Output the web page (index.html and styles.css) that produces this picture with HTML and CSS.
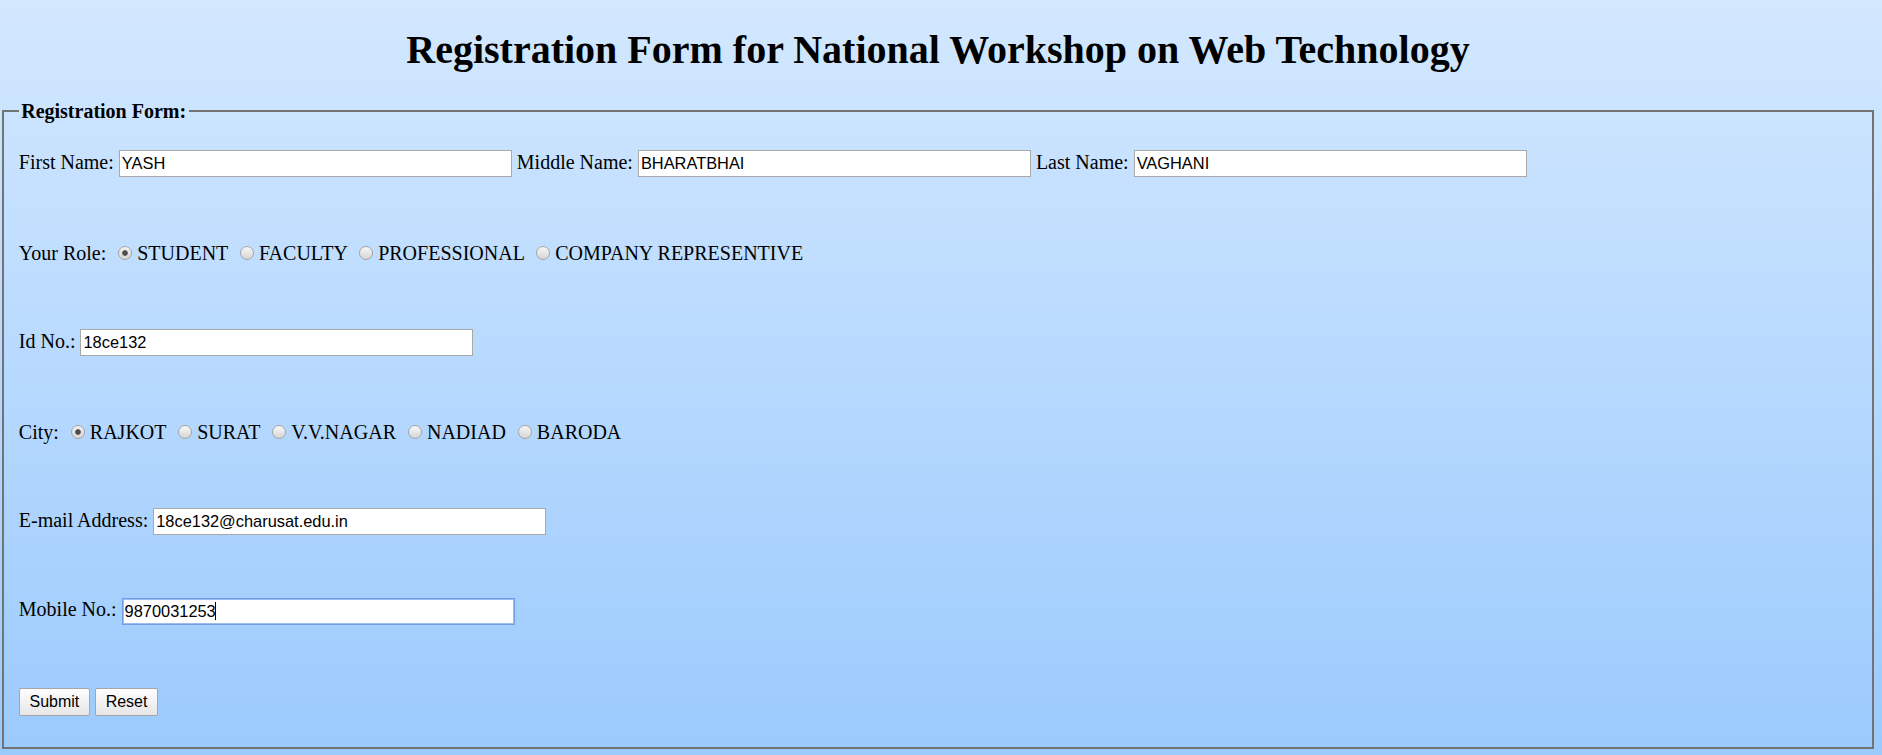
FILE: index.html
```html
<!DOCTYPE html>
<html lang="en">
<head>
<meta charset="utf-8">
<title>Registration Form</title>
<link rel="stylesheet" href="styles.css">
</head>
<body>
<h1 class="title">Registration Form for National Workshop on Web Technology</h1>
<form class="form">
  <fieldset class="box">
    <legend class="legend"><b>Registration Form:</b></legend>
    <div class="rows">
      <div class="row">First Name: <input class="field" type="text" value="YASH"> Middle Name: <input class="field" type="text" value="BHARATBHAI"> Last Name: <input class="field" type="text" value="VAGHANI"></div>
      <div class="row row-choice">Your Role: <input class="radio" type="radio" name="role" checked>STUDENT <input class="radio" type="radio" name="role">FACULTY <input class="radio" type="radio" name="role">PROFESSIONAL <input class="radio" type="radio" name="role">COMPANY REPRESENTIVE</div>
      <div class="row">Id No.: <input class="field" type="text" value="18ce132"></div>
      <div class="row row-choice">City: <input class="radio" type="radio" name="city" checked>RAJKOT <input class="radio" type="radio" name="city">SURAT <input class="radio" type="radio" name="city">V.V.NAGAR <input class="radio" type="radio" name="city">NADIAD <input class="radio" type="radio" name="city">BARODA</div>
      <div class="row">E-mail Address: <input class="field" type="text" value="18ce132@charusat.edu.in"></div>
      <div class="row">Mobile No.: <span class="caret-wrap"><input class="field field-focus" type="text" value="9870031253"><span class="caret"></span></span></div>
      <div class="row row-buttons"><button class="btn" type="button">Submit</button> <button class="btn" type="button">Reset</button></div>
    </div>
  </fieldset>
</form>
</body>
</html>
```
FILE: styles.css
```css
html {
  min-height: 100%;
  background: linear-gradient(to bottom, #d3e8ff 0%, #9bcafd 100%);
}

body {
  margin: 0;
  padding: 0 8px 0 2px;
  font-family: "Liberation Serif", "Times New Roman", serif;
  font-size: 20px;
  color: #000;
}

.title {
  margin: 26px 0 26px;
  font-size: 40px;
  line-height: 48px;
  font-weight: bold;
  text-align: center;
}

.form {
  margin: 0;
}

.box {
  margin: 0;
  padding: 26.5px 14.8px 32.2px;
  border: 2px solid #737373;
  min-width: 0;
}

.legend {
  padding: 0 2.4px;
  line-height: 22px;
  font-size: 20px;
}

.rows {
  display: flex;
  flex-direction: column;
  gap: 60.5px;
}

.row {
  box-sizing: border-box;
  height: 29px;
  line-height: 27px;
  white-space: nowrap;
}

.row-choice {
  padding-top: 1.5px;
}

.row-buttons {
  padding-top: 1px;
}

.field {
  box-sizing: border-box;
  width: 393px;
  height: 27px;
  margin: 0;
  padding: 0 2px;
  border: 1px solid #a9a9a9;
  background: #fff;
  font-family: "Liberation Sans", Arial, sans-serif;
  font-size: 16.4px;
  color: #000;
  vertical-align: middle;
  outline: none;
}

.field-focus {
  border-color: #6f9de6;
  box-shadow: inset 0 0 0 1px #9dbdf0;
  vertical-align: top;
}

.caret-wrap {
  position: relative;
  display: inline-block;
  vertical-align: middle;
  line-height: 0;
  font-size: 0;
}

.caret {
  position: absolute;
  left: 93.5px;
  top: 4px;
  width: 1px;
  height: 18px;
  background: #000;
}

.radio {
  appearance: none;
  -webkit-appearance: none;
  box-sizing: border-box;
  width: 14px;
  height: 14px;
  margin: 0 5px 0 7px;
  border: 1px solid #a4a4a4;
  border-radius: 50%;
  background: linear-gradient(to bottom, #f7f7f7, #d6d6d6);
  vertical-align: baseline;
}

.radio:checked {
  background:
    radial-gradient(circle, #4e4e4e 0, #4e4e4e 2.4px, rgba(78, 78, 78, 0) 3.2px),
    linear-gradient(to bottom, #f2f2f2, #d6d6d6);
}

.btn {
  box-sizing: border-box;
  height: 27.5px;
  margin: 0;
  padding: 0 9.7px;
  border: 1px solid #a6a6a6;
  border-radius: 2px;
  background: linear-gradient(to bottom, #fefefe, #e6e6e6);
  font-family: "Liberation Sans", Arial, sans-serif;
  font-size: 16px;
  color: #000;
  vertical-align: middle;
}
```
